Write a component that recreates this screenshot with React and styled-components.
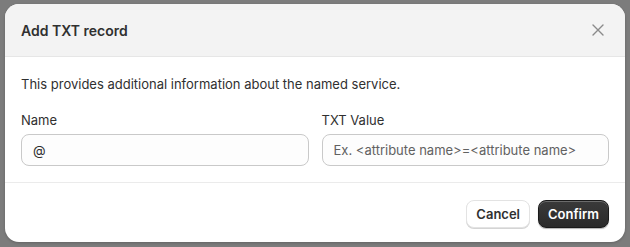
import React from "react";
import styled, { createGlobalStyle } from "styled-components";

const GlobalStyle = createGlobalStyle`
	html, body {
		margin: 0;
		padding: 0;
		background: #7c7c7c;
		font-family: Inter, "Noto Sans", sans-serif;
	}
	* {
		box-sizing: border-box;
	}
`;

const Backdrop = styled.div`
	width: 630px;
	height: 247px;
	padding: 4px 5px 5px;
	background: #7c7c7c;
`;

const Modal = styled.div`
	background: #ffffff;
	border-radius: 14px;
	overflow: hidden;
	display: flex;
	flex-direction: column;
	height: 238px;
	box-shadow: 0 1px 3px rgba(0, 0, 0, 0.2);
`;

const Header = styled.div`
	height: 53px;
	flex: none;
	background: #f3f3f3;
	border-bottom: 1px solid #e6e6e6;
	display: flex;
	align-items: center;
	justify-content: space-between;
	padding: 0 16px;
`;

const Title = styled.h2`
	margin: 0;
	font-size: 14px;
	font-weight: 600;
	color: #303030;
`;

const CloseButton = styled.button`
	border: none;
	background: none;
	padding: 0;
	width: 20px;
	height: 20px;
	display: flex;
	align-items: center;
	justify-content: center;
	color: #8a8a8a;
	cursor: pointer;
	margin-right: 1px;
`;

const Body = styled.div`
	padding: 17px 16px 16px;
	border-bottom: 1px solid #ebebeb;
	display: flex;
	flex-direction: column;
	gap: 16px;
`;

const Text = styled.p`
	margin: 0;
	font-size: 13px;
	line-height: 20px;
	color: #303030;
`;

const Fields = styled.div`
	display: grid;
	grid-template-columns: 1fr 1fr;
	gap: 13px;
`;

const Field = styled.label`
	display: flex;
	flex-direction: column;
	gap: 4px;
`;

const Label = styled.span`
	font-size: 13px;
	line-height: 20px;
	color: #303030;
`;

const Input = styled.input`
	height: 32px;
	width: 100%;
	border: 1px solid #c9c9c9;
	border-radius: 8px;
	background: #fdfdfd;
	padding: 0 11px;
	font-family: inherit;
	font-size: 13px;
	color: #303030;

	&::placeholder {
		color: #616161;
	}
`;

const Footer = styled.div`
	flex: 1;
	display: flex;
	justify-content: flex-end;
	align-items: flex-start;
	gap: 8px;
	padding: 17px 16px 16px;
`;

const Button = styled.button`
	height: 28px;
	padding: 0 9px;
	border-radius: 8px;
	font-family: inherit;
	font-size: 13px;
	font-weight: 600;
	cursor: pointer;
	border: ${(p) => (p.$primary ? "1px solid #1a1a1a" : "1px solid #e3e3e3")};
	background: ${(p) =>
		p.$primary ? "linear-gradient(180deg, #3a3a3a 0%, #2a2a2a 100%)" : "#ffffff"};
	color: ${(p) => (p.$primary ? "#ffffff" : "#303030")};
	box-shadow: ${(p) =>
		p.$primary
			? "inset 0 1px 0 rgba(255,255,255,0.25), 0 1px 1px rgba(0,0,0,0.3)"
			: "0 1px 0 #d4d4d4"};
`;

const App = () => {
	return (
		<>
			<GlobalStyle />
			<Backdrop>
				<Modal>
					<Header>
						<Title>Add TXT record</Title>
						<CloseButton aria-label="Close">
							<svg width="12" height="12" viewBox="0 0 12 12">
								<path
									d="M1 1 L11 11 M11 1 L1 11"
									stroke="currentColor"
									strokeWidth="1.4"
									strokeLinecap="round"
								/>
							</svg>
						</CloseButton>
					</Header>
					<Body>
						<Text>This provides additional information about the named service.</Text>
						<Fields>
							<Field>
								<Label>Name</Label>
								<Input defaultValue="@" />
							</Field>
							<Field>
								<Label>TXT Value</Label>
								<Input placeholder="Ex. <attribute name>=<attribute name>" />
							</Field>
						</Fields>
					</Body>
					<Footer>
						<Button>Cancel</Button>
						<Button $primary>Confirm</Button>
					</Footer>
				</Modal>
			</Backdrop>
		</>
	);
};

export default App;
